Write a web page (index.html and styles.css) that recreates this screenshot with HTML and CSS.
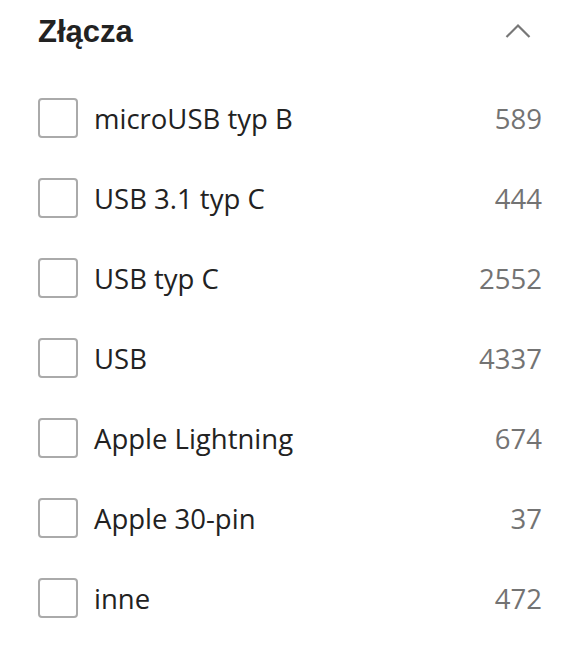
FILE: index.html
```html
<!DOCTYPE html>
<html lang="pl">
<head>
<meta charset="utf-8">
<link rel="stylesheet" href="styles.css">
</head>
<body>
<section class="filter">
  <header class="filter-head">
    <h2 class="filter-title">Złącza</h2>
    <svg class="chevron" width="26" height="16" viewBox="0 0 26 16"><path d="M1.5 14 L13 2.5 L24.5 14" fill="none" stroke="#777" stroke-width="2.2"/></svg>
  </header>
  <ul class="options">
    <li class="option"><span class="box"></span><span class="label">microUSB typ B</span><span class="count">589</span></li>
    <li class="option"><span class="box"></span><span class="label">USB 3.1 typ C</span><span class="count">444</span></li>
    <li class="option"><span class="box"></span><span class="label">USB typ C</span><span class="count">2552</span></li>
    <li class="option"><span class="box"></span><span class="label">USB</span><span class="count">4337</span></li>
    <li class="option"><span class="box"></span><span class="label">Apple Lightning</span><span class="count">674</span></li>
    <li class="option"><span class="box"></span><span class="label">Apple 30-pin</span><span class="count">37</span></li>
    <li class="option"><span class="box"></span><span class="label">inne</span><span class="count">472</span></li>
  </ul>
</section>
</body>
</html>
```
FILE: styles.css
```css
html, body { margin: 0; padding: 0; background: #fff; }
.filter { padding: 0 44px 0 38px; }
.filter-head {
  height: 62px;
  display: flex;
  align-items: center;
  justify-content: space-between;
}
.filter-title {
  margin: 0;
  font-family: "Liberation Sans", Arial, sans-serif;
  font-weight: 700;
  font-size: 31px;
  color: #222;
  line-height: 1;
}
.chevron { margin-right: 11px; }
.options { list-style: none; margin: 16px 0 0; padding: 0; }
.option {
  height: 80px;
  display: flex;
  align-items: center;
  font-family: "Open Sans", sans-serif;
  font-size: 27.5px;
}
.box {
  width: 36px; height: 36px;
  border: 2px solid #aaa;
  border-radius: 4px;
  flex: none;
}
.label { margin-left: 16px; color: #222; flex: 1; }
.count { color: #737373; }
```
